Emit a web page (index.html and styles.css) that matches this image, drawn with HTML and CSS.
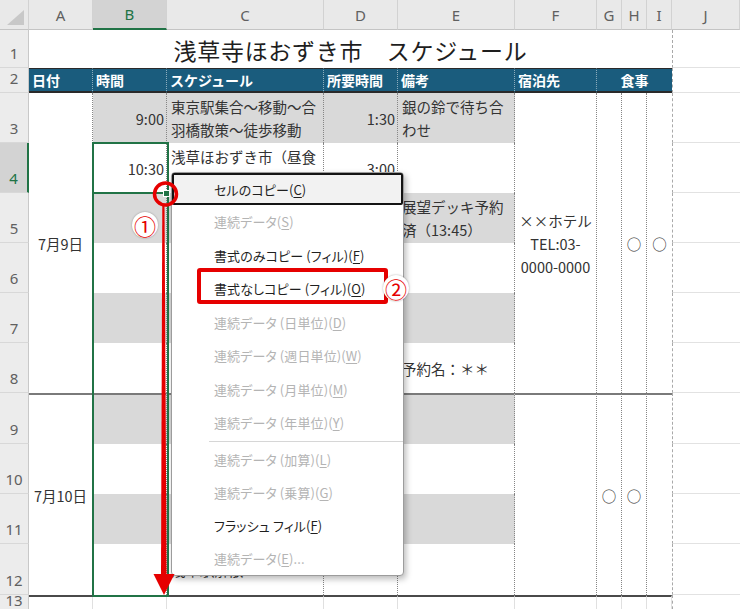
FILE: index.html
```html
<!DOCTYPE html>
<html lang="ja">
<head>
<meta charset="utf-8">
<title>浅草寺ほおずき市 スケジュール</title>
<link rel="stylesheet" href="styles.css">
</head>
<body>
<div class="page">
  <div class="sheet">
    <!-- column headers -->
    <div class="corner"></div>
    <div class="ch">A</div>
    <div class="ch on">B</div>
    <div class="ch">C</div>
    <div class="ch">D</div>
    <div class="ch">E</div>
    <div class="ch">F</div>
    <div class="ch">G</div>
    <div class="ch">H</div>
    <div class="ch">I</div>
    <div class="ch">J</div>

    <!-- row 1 -->
    <div class="rh">1</div>
    <div class="title">浅草寺ほおずき市　スケジュール</div>
    <div class="j"></div>

    <!-- row 2 -->
    <div class="rh">2</div>
    <div class="hd">日付</div>
    <div class="hd">時間</div>
    <div class="hd">スケジュール</div>
    <div class="hd">所要時間</div>
    <div class="hd">備考</div>
    <div class="hd">宿泊先</div>
    <div class="hd meal">食事</div>
    <div class="j"></div>

    <!-- row 3 -->
    <div class="rh">3</div>
    <div class="d day1 ctr"><span>7月9日</span></div>
    <div class="d g num"><span>9:00</span></div>
    <div class="d g"><span>東京駅集合～移動～合<br>羽橋散策～徒歩移動</span></div>
    <div class="d g num"><span>1:30</span></div>
    <div class="d g"><span>銀の鈴で待ち合<br>わせ</span></div>
    <div class="d day1 ctr"><span>××ホテル<br>TEL:03-<br>0000-0000</span></div>
    <div class="d day1"></div>
    <div class="d day1 ctr"><span>○</span></div>
    <div class="d day1 ctr last"><span>○</span></div>
    <div class="j"></div>

    <!-- row 4 -->
    <div class="rh on">4</div>
    <div class="d num"><span>10:30</span></div>
    <div class="d"><span>浅草ほおずき市（昼食<br>含む）</span></div>
    <div class="d num"><span>3:00</span></div>
    <div class="d"></div>
    <div class="j"></div>

    <!-- row 5 -->
    <div class="rh">5</div>
    <div class="d g"></div>
    <div class="d g"></div>
    <div class="d g"></div>
    <div class="d g"><span>展望デッキ予約<br>済（13:45）</span></div>
    <div class="j"></div>

    <!-- row 6 -->
    <div class="rh">6</div>
    <div class="d"></div>
    <div class="d"></div>
    <div class="d"></div>
    <div class="d"></div>
    <div class="j"></div>

    <!-- row 7 -->
    <div class="rh">7</div>
    <div class="d g"></div>
    <div class="d g"></div>
    <div class="d g"></div>
    <div class="d g"></div>
    <div class="j"></div>

    <!-- row 8 -->
    <div class="rh">8</div>
    <div class="d"></div>
    <div class="d"></div>
    <div class="d"></div>
    <div class="d"><span>予約名：＊＊</span></div>
    <div class="j"></div>

    <!-- row 9 -->
    <div class="rh">9</div>
    <div class="d day2 ctr top"><span>7月10日</span></div>
    <div class="d g top"></div>
    <div class="d g top"></div>
    <div class="d g top"></div>
    <div class="d g top"></div>
    <div class="d day2 top"></div>
    <div class="d day2 ctr top"><span>○</span></div>
    <div class="d day2 ctr top"><span>○</span></div>
    <div class="d day2 top last"></div>
    <div class="j"></div>

    <!-- row 10 -->
    <div class="rh">10</div>
    <div class="d"></div>
    <div class="d"></div>
    <div class="d"></div>
    <div class="d"></div>
    <div class="j"></div>

    <!-- row 11 -->
    <div class="rh">11</div>
    <div class="d g"></div>
    <div class="d g"></div>
    <div class="d g"></div>
    <div class="d g"></div>
    <div class="j"></div>

    <!-- row 12 -->
    <div class="rh">12</div>
    <div class="d"></div>
    <div class="d"><span>浅草駅解散</span></div>
    <div class="d"></div>
    <div class="d"></div>
    <div class="j"></div>

    <!-- row 13 -->
    <div class="rh">13</div>
    <div class="e"></div>
    <div class="e"></div>
    <div class="e"></div>
    <div class="e"></div>
    <div class="e"></div>
    <div class="e"></div>
    <div class="e"></div>
    <div class="e"></div>
    <div class="e"></div>
    <div class="j"></div>
  </div>

  <!-- selection / fill range -->
  <div class="sel"></div>
  <div class="active-line"></div>
  <div class="handle"></div>

  <!-- auto fill options menu -->
  <div class="menu">
    <div class="mi hot">セルのコピー(<u>C</u>)</div>
    <div class="mi dis">連続データ(<u>S</u>)</div>
    <div class="mi">書式のみコピー (フィル)(<u>F</u>)</div>
    <div class="mi">書式なしコピー (フィル)(<u>O</u>)</div>
    <div class="mi dis">連続データ (日単位)(<u>D</u>)</div>
    <div class="mi dis">連続データ (週日単位)(<u>W</u>)</div>
    <div class="mi dis">連続データ (月単位)(<u>M</u>)</div>
    <div class="mi dis">連続データ (年単位)(<u>Y</u>)</div>
    <div class="sep"></div>
    <div class="mi sm dis">連続データ (加算)(<u>L</u>)</div>
    <div class="mi sm dis">連続データ (乗算)(<u>G</u>)</div>
    <div class="mi sm">フラッシュ フィル(<u>F</u>)</div>
    <div class="mi sm dis">連続データ(<u>E</u>)...</div>
  </div>

  <svg class="marks" width="740" height="609" viewBox="0 0 740 609">
    <polygon points="162.3,204 164.5,204 166.6,577 161,577" fill="#e60000"/>
    <polygon points="153.5,574 174.5,574 164,595" fill="#e60000"/>
    <circle cx="165.5" cy="194" r="11" fill="none" stroke="#e60000" stroke-width="3.5"/>
  </svg>

  <div class="redbox"></div>
  <div class="badge b1">①</div>
  <div class="badge b2">②</div>
</div>
</body>
</html>
```

FILE: styles.css
```css
html, body {
  margin: 0;
  padding: 0;
  background: #ffffff;
}

body {
  width: 740px;
  height: 609px;
  overflow: hidden;
  font-family: "Noto Sans CJK JP", "Noto Sans", sans-serif;
}

.page {
  position: relative;
  width: 740px;
  height: 609px;
  overflow: hidden;
}

.sheet {
  display: grid;
  grid-template-columns: 29px 64px 74px 157px 74px 117px 82px 25px 25px 25px 68px;
  grid-template-rows: 30px 38px 25px repeat(6, 50px) 51px 50px 50px 51px 20px;
}

.sheet > div {
  box-sizing: border-box;
  min-width: 0;
  overflow: hidden;
}

/* column headers */
.corner {
  position: relative;
  background: #e9e9e9;
  border-right: 1px solid #d2d2d2;
  border-bottom: 1px solid #c4c4c4;
}

.corner::after {
  content: "";
  position: absolute;
  right: 4px;
  bottom: 4px;
  width: 0;
  height: 0;
  border-left: 17px solid transparent;
  border-bottom: 15px solid #c8c8c8;
}

.ch {
  background: #e9e9e9;
  border-right: 1px solid #d2d2d2;
  border-bottom: 1px solid #c4c4c4;
  color: #606060;
  font-family: "Noto Sans", sans-serif;
  font-size: 15px;
  display: flex;
  align-items: center;
  justify-content: center;
}

.ch.on {
  background: #d3d3d3;
  color: #217346;
  border-bottom: 2px solid #217346;
}

/* row headers */
.rh {
  background: #ececec;
  border-right: 1px solid #c8c8c8;
  border-bottom: 1px solid #d8d8d8;
  color: #606060;
  font-family: "Noto Sans", sans-serif;
  font-size: 15px;
  line-height: 20px;
  display: flex;
  align-items: flex-end;
  justify-content: center;
  padding-bottom: 4px;
}

.rh.on {
  background: #d3d3d3;
  color: #217346;
  border-right: 2px solid #217346;
}

/* title */
.title {
  grid-column: span 9;
  background: #ffffff;
  display: flex;
  align-items: center;
  justify-content: center;
  font-size: 23px;
  letter-spacing: 0.7px;
  color: #1e1e1e;
  padding-top: 1px;
}

/* table header */
.hd {
  background: #1a5c7d;
  color: #ffffff;
  font-weight: 700;
  font-size: 14px;
  border-top: 1px solid #2a2a2a;
  border-bottom: 2px solid #2a2a2a;
  border-right: 1px dotted rgba(255, 255, 255, 0.5);
  display: flex;
  align-items: center;
  padding-left: 3px;
  white-space: nowrap;
}

.hd.meal {
  grid-column: span 3;
  justify-content: center;
  border-right: none;
  padding-left: 0;
}

/* data cells */
.d {
  background: #ffffff;
  border-right: 1px dotted #858585;
  display: flex;
  align-items: center;
  padding: 0 3px 0 4px;
  font-size: 14.5px;
  line-height: 23px;
  color: #333333;
  white-space: nowrap;
}

.g {
  background: #d9d9d9;
}

.num {
  justify-content: flex-end;
  padding-right: 2px;
}

.ctr {
  justify-content: center;
  text-align: center;
  padding: 0;
}

.day1 {
  grid-row: span 6;
}

.day2 {
  grid-row: span 4;
}

.top {
  border-top: 2px solid #7a7a7a;
}

.last {
  border-right: none;
}

/* outside the table */
.j {
  background: #ffffff;
  border-left: 1px dashed #a9a9a9;
  border-bottom: 1px solid #e2e2e2;
}

.e {
  background: #ffffff;
  border-top: 2px solid #4a4a4a;
  border-right: 1px solid #e0e0e0;
}

/* selection */
.sel {
  position: absolute;
  left: 92px;
  top: 142px;
  width: 77px;
  height: 455px;
  box-sizing: border-box;
  border: 2px solid #217346;
}

.active-line {
  position: absolute;
  left: 92px;
  top: 192px;
  width: 77px;
  height: 2px;
  background: #217346;
}

.handle {
  position: absolute;
  left: 163px;
  top: 190px;
  width: 5px;
  height: 5px;
  background: #217346;
  border: 1px solid #ffffff;
}

/* menu */
.menu {
  position: absolute;
  left: 171px;
  top: 172px;
  width: 233px;
  box-sizing: border-box;
  background: #ffffff;
  border: 1px solid #9c9c9c;
  border-radius: 4px;
  box-shadow: 2px 3px 6px rgba(0, 0, 0, 0.28);
  display: flex;
  flex-direction: column;
}

.mi {
  height: 33.5px;
  box-sizing: border-box;
  display: flex;
  align-items: center;
  padding-left: 42px;
  font-size: 13px;
  letter-spacing: 0.1px;
  color: #1f1f1f;
  font-feature-settings: "palt";
  white-space: nowrap;
}

.mi.sm {
  height: 33px;
}

.mi u {
  text-underline-offset: 2px;
}

.mi.hot {
  height: 32px;
  border: 2px solid #141414;
  background: #f2f2f2;
  border-radius: 2px;
  padding-left: 40px;
}

.mi.dis {
  color: #b4b4b4;
}

.sep {
  height: 3px;
  margin-left: 37px;
  position: relative;
}

.sep::after {
  content: "";
  position: absolute;
  left: 0;
  right: 0;
  top: 1px;
  height: 1px;
  background: #d6d6d6;
}

/* annotations */
.marks {
  position: absolute;
  left: 0;
  top: 0;
  pointer-events: none;
}

.redbox {
  position: absolute;
  left: 197px;
  top: 268px;
  width: 191px;
  height: 36px;
  box-sizing: border-box;
  border: 4px solid #e60000;
  border-radius: 3px;
}

.badge {
  position: absolute;
  width: 26px;
  height: 26px;
  border-radius: 50%;
  background: #ffffff;
  box-shadow: 0 0 2px rgba(0, 0, 0, 0.35);
  color: #e60000;
  font-size: 22px;
  line-height: 26px;
  display: flex;
  align-items: center;
  justify-content: center;
}

.b1 {
  left: 132px;
  top: 212px;
}

.b2 {
  left: 383px;
  top: 275px;
}
```
